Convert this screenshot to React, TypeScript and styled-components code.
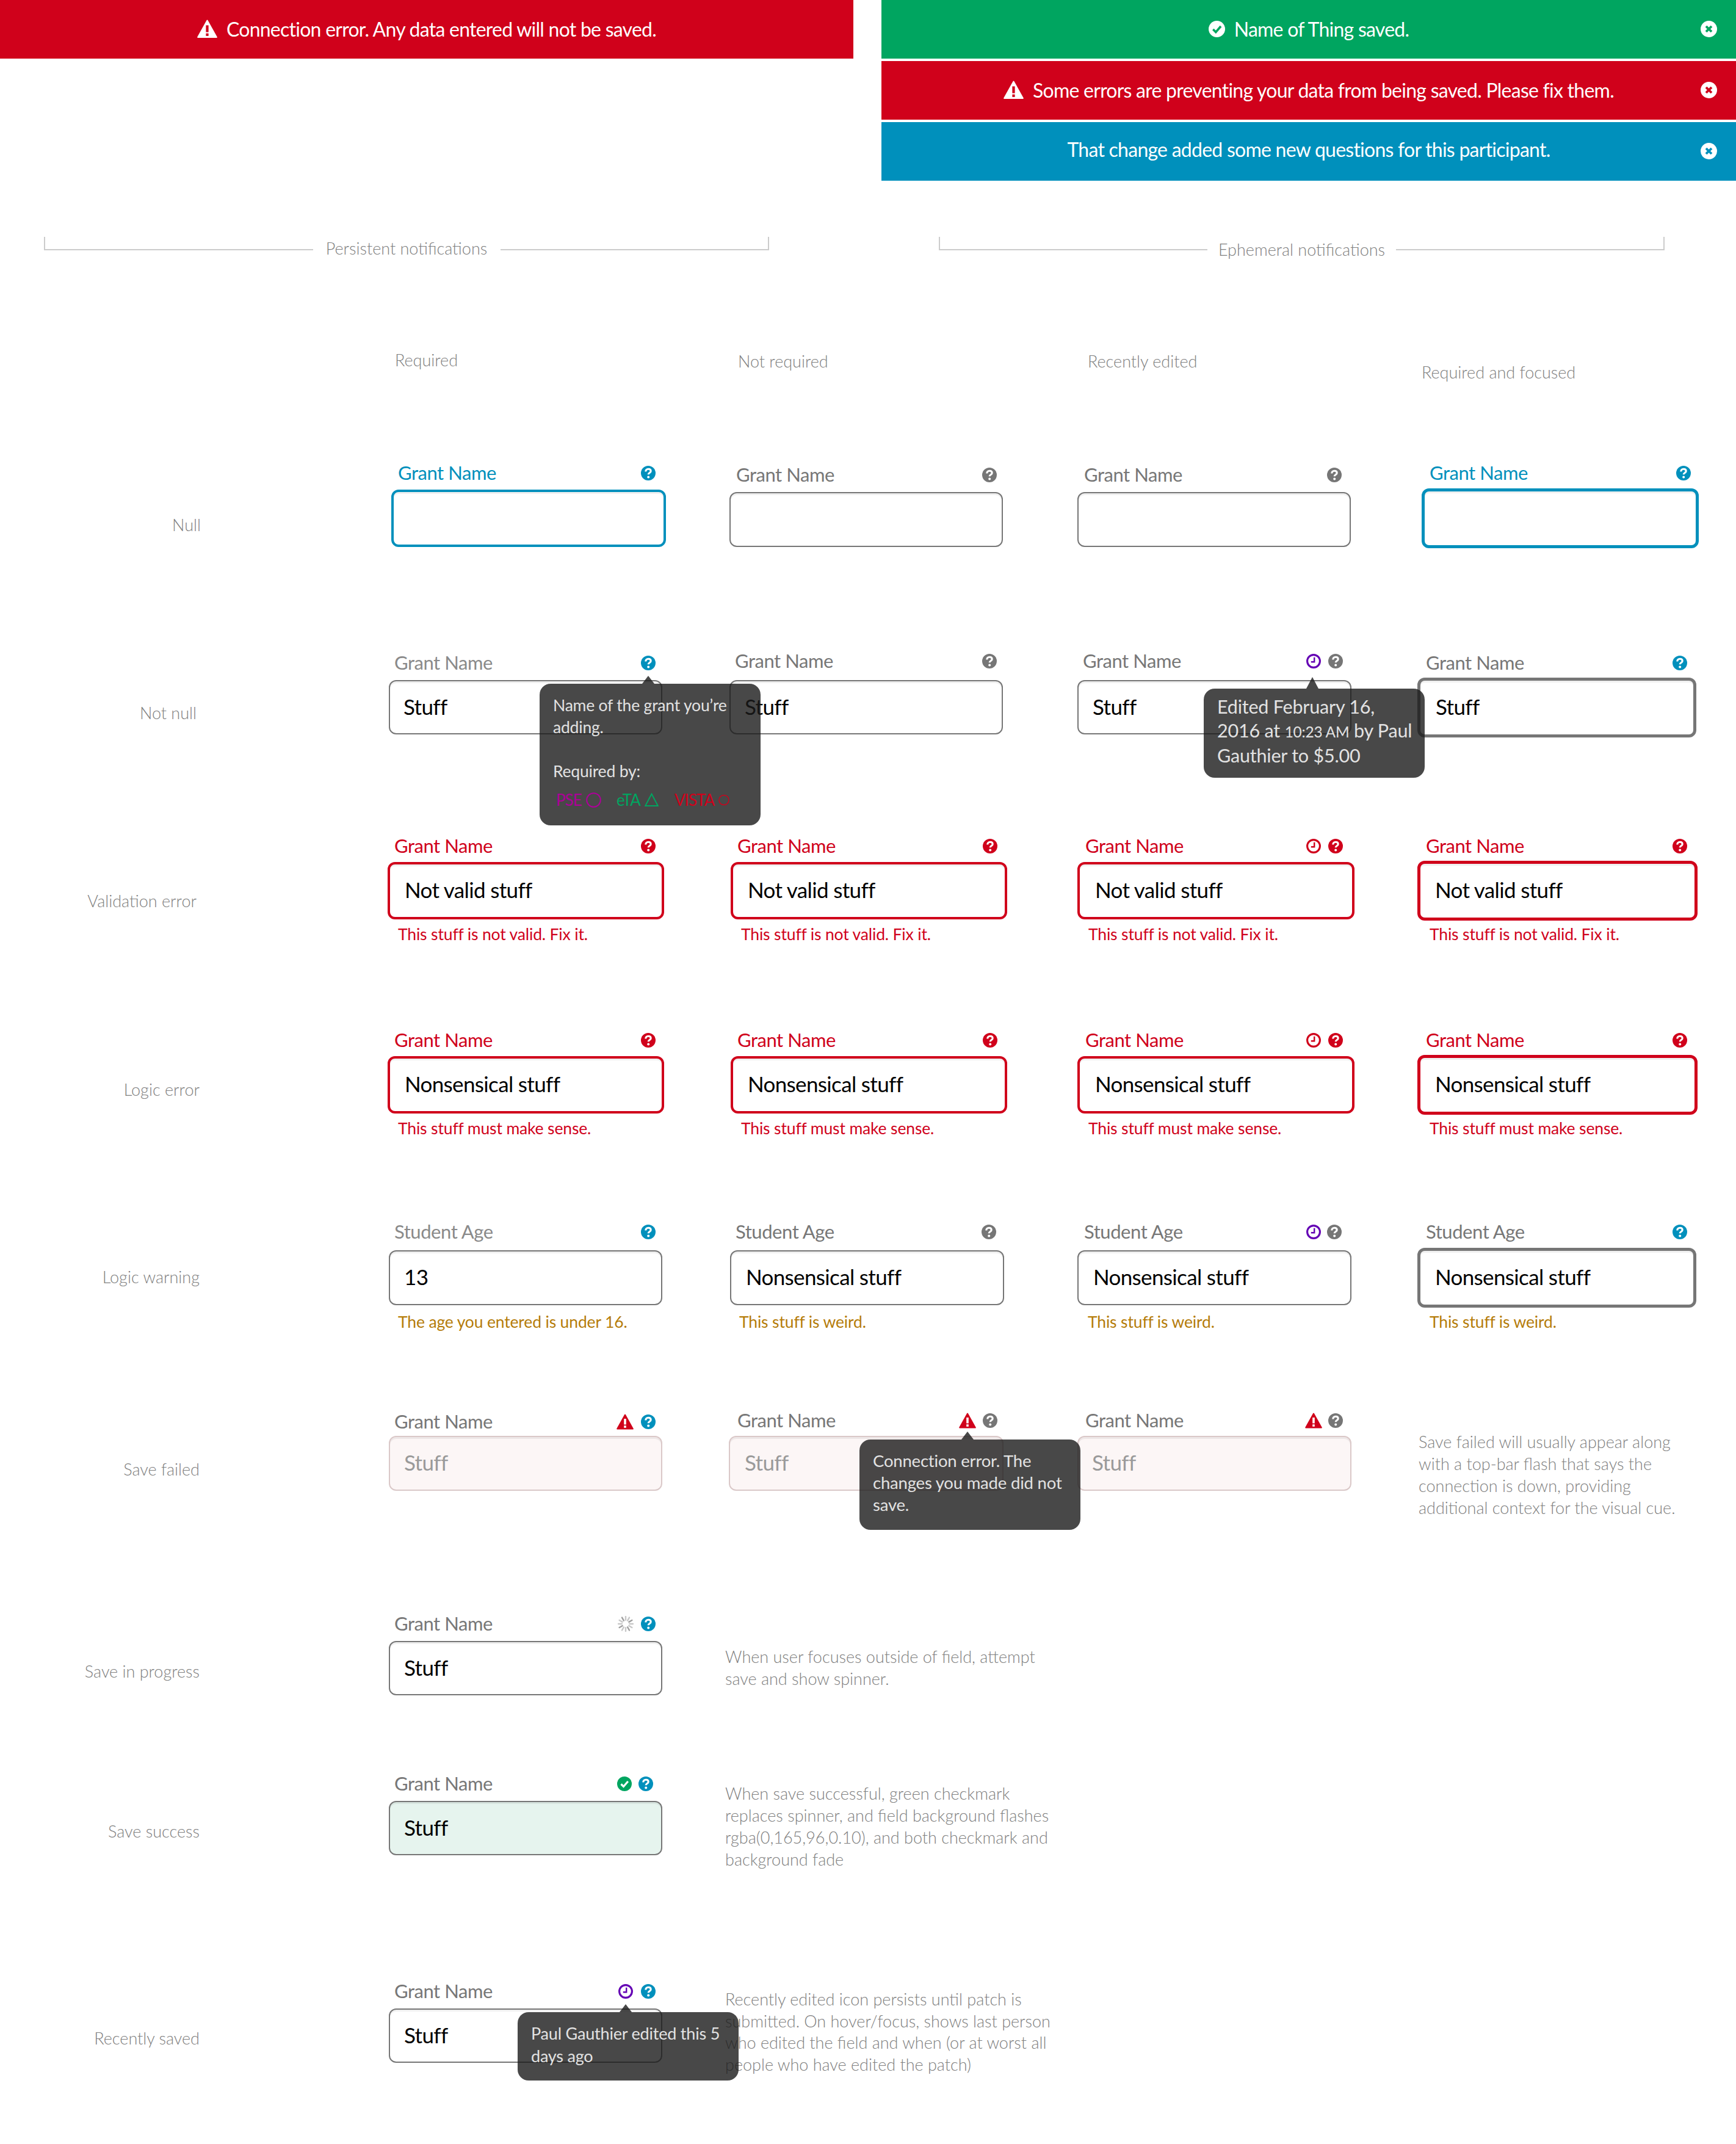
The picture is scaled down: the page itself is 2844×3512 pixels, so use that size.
import React from 'react';
import styled, { createGlobalStyle } from 'styled-components';

const RED = '#d0011b';
const BLUE = '#0090bc';
const GREEN = '#00a560';
const GRAY = '#767676';
const PURPLE = '#6400b4';
const AMBER = '#b57c0a';
const MUTED = '#808080';
const COLS = [0, 635, 1188, 1765, 2322];

const Global = createGlobalStyle`
  html, body { margin: 0; padding: 0; background: #fff; }
  body { font-family: Lato, "Open Sans", "Liberation Sans", sans-serif; }
  * { box-sizing: border-box; }
`;

const Page = styled.div`
  width: 2844px;
  height: 3512px;
  overflow: hidden;
  background: #fff;
`;

/* ---------- banners ---------- */
const BannerArea = styled.div`
  display: flex;
  align-items: flex-start;
  justify-content: space-between;
`;
const BannerStack = styled.div<{ $w: number }>`
  display: flex;
  flex-direction: column;
  gap: 4px;
  width: ${(p) => p.$w}px;
`;
const Banner = styled.div<{ $bg: string; $lift?: number }>`
  position: relative;
  height: 96px;
  display: flex;
  align-items: center;
  justify-content: center;
  gap: 15px;
  padding-bottom: ${(p) => p.$lift ?? 2}px;
  background: ${(p) => p.$bg};
  color: #fff;
  font-size: 32px;
  letter-spacing: -0.75px;
`;
const CloseSlot = styled.span`
  position: absolute;
  right: 31px;
  top: 34px;
  line-height: 0;
`;

/* ---------- brackets ---------- */
const BracketArea = styled.div`
  display: flex;
  margin-top: 92px;
  height: 172px;
`;
const Bracket = styled.div<{ $ml: number; $w: number }>`
  display: flex;
  align-items: flex-start;
  margin-left: ${(p) => p.$ml}px;
  width: ${(p) => p.$w}px;
`;
const BracketArm = styled.div<{ $side: 'left' | 'right' }>`
  flex: 1;
  height: 22px;
  border-bottom: 2px solid #ccc;
  border-${(p) => p.$side}: 2px solid #ccc;
`;
const BracketLabel = styled.div<{ $w: number; $mt: number }>`
  width: ${(p) => p.$w}px;
  margin-top: ${(p) => p.$mt}px;
  text-align: center;
  font-size: 27px;
  font-weight: 300;
  line-height: 36px;
  color: ${MUTED};
`;

/* ---------- matrix ---------- */
const Row = styled.div<{ $h: number }>`
  display: grid;
  grid-template-columns: 635px 553px 577px 557px 522px;
  align-items: start;
  height: ${(p) => p.$h}px;
`;
const ColumnHead = styled.div<{ $ml: number; $mt: number }>`
  margin-left: ${(p) => p.$ml}px;
  margin-top: ${(p) => p.$mt}px;
  font-size: 27px;
  font-weight: 300;
  line-height: 36px;
  color: ${MUTED};
  white-space: nowrap;
`;
const RowTitle = styled.div<{ $pr: number; $mt: number }>`
  padding-right: ${(p) => p.$pr}px;
  margin-top: ${(p) => p.$mt}px;
  text-align: right;
  font-size: 27px;
  font-weight: 300;
  line-height: 36px;
  color: ${MUTED};
  white-space: nowrap;
`;
const Cell = styled.div<{ $ml: number; $mt: number; $w: number }>`
  position: relative;
  margin-left: ${(p) => p.$ml}px;
  margin-top: ${(p) => p.$mt}px;
  width: ${(p) => p.$w}px;
`;
const LabelRow = styled.div<{ $h: number; $pl: number; $pr: number }>`
  display: flex;
  align-items: flex-start;
  justify-content: space-between;
  height: ${(p) => p.$h}px;
  padding-left: ${(p) => p.$pl}px;
  padding-right: ${(p) => p.$pr}px;
`;
const FieldLabel = styled.div<{ $c: string }>`
  font-size: 31px;
  line-height: 38px;
  color: ${(p) => p.$c};
  letter-spacing: -0.45px;
  white-space: nowrap;
`;
const IconGroup = styled.div<{ $gap: number }>`
  display: flex;
  align-items: center;
  height: 40px;
  gap: ${(p) => p.$gap}px;
`;
const Input = styled.div<{ $c: string; $bw: number; $bg: string; $h: number; $pl: number; $text: string }>`
  display: flex;
  align-items: center;
  height: ${(p) => p.$h}px;
  padding-left: ${(p) => p.$pl}px;
  padding-bottom: 4px;
  border: ${(p) => p.$bw}px solid ${(p) => p.$c};
  border-radius: 12px;
  background: ${(p) => p.$bg};
  box-shadow: inset 0 3px 0 rgba(0, 0, 0, 0.06);
  color: ${(p) => p.$text};
  font-size: 35px;
  letter-spacing: -0.65px;
  white-space: nowrap;
`;
const Message = styled.div<{ $c: string; $pl: number; $mt: number }>`
  margin-top: ${(p) => p.$mt}px;
  padding-left: ${(p) => p.$pl}px;
  color: ${(p) => p.$c};
  font-size: 26.5px;
  line-height: 36px;
  letter-spacing: -0.15px;
  white-space: nowrap;
`;
const Note = styled.div<{ $col: number; $ml: number; $mt: number; $lh: number }>`
  grid-column: ${(p) => p.$col};
  margin-left: ${(p) => p.$ml}px;
  margin-top: ${(p) => p.$mt}px;
  color: ${MUTED};
  font-size: 27px;
  font-weight: 300;
  line-height: ${(p) => p.$lh}px;
  white-space: nowrap;
`;

/* ---------- tooltips ---------- */
const TIP_BG = 'rgba(26, 26, 26, 0.8)';
const Tooltip = styled.div<{ $left: number; $top: number; $h: number; $pt: number; $lh: number; $fs: number }>`
  position: absolute;
  z-index: 5;
  left: ${(p) => p.$left}px;
  top: ${(p) => p.$top}px;
  width: 362px;
  height: ${(p) => p.$h}px;
  padding: ${(p) => p.$pt}px 0 0 22px;
  border-radius: 18px;
  background: ${TIP_BG};
  color: #e2e2e2;
  font-size: ${(p) => p.$fs}px;
  line-height: ${(p) => p.$lh}px;
  letter-spacing: -0.2px;
  white-space: nowrap;
`;
const TipArrow = styled.span<{ $left: number; $h: number }>`
  position: absolute;
  left: ${(p) => p.$left - 10}px;
  bottom: 100%;
  width: 0;
  height: 0;
  border-left: 10px solid transparent;
  border-right: 10px solid transparent;
  border-bottom: ${(p) => p.$h}px solid ${TIP_BG};
`;
const TipGap = styled.div`
  height: 36px;
`;
const TagRow = styled.div`
  display: flex;
  align-items: center;
  height: 36px;
  margin-top: 11px;
  margin-left: 5px;
`;
const Tag = styled.span<{ $c: string; $w: number }>`
  display: inline-flex;
  align-items: center;
  gap: 7px;
  width: ${(p) => p.$w}px;
  color: ${(p) => p.$c};
  font-size: 26px;
  letter-spacing: -1px;
`;
const SmallTime = styled.span`
  font-size: 0.8em;
`;

/* ---------- icons ---------- */
const QIcon = ({ c }: { c: string }) => (
  <svg width="24" height="24" viewBox="0 0 24 24">
    <circle cx="12" cy="12" r="12" fill={c} />
    <path d="M7.8 9.4c0-2.6 1.8-4.2 4.3-4.2s4.1 1.4 4.1 3.5c0 3-4 2.7-4 5.6" fill="none" stroke="#fff" strokeWidth="3.1" />
    <circle cx="12.2" cy="18.6" r="2" fill="#fff" />
  </svg>
);
const ClockIcon = ({ c }: { c: string }) => (
  <svg width="24" height="24" viewBox="0 0 24 24">
    <circle cx="12" cy="12" r="10.4" fill="#fff" stroke={c} strokeWidth="3.1" />
    <path d="M13.2 5.8v7.5H7.8" fill="none" stroke={c} strokeWidth="2.4" />
  </svg>
);
const WarnIcon = ({ c, mark, size = 28 }: { c: string; mark: string; size?: number }) => (
  <svg width={size} height={size * 0.93} viewBox="0 0 28 26">
    <path d="M14 1.5 26.8 24.5H1.2Z" fill={c} stroke={c} strokeWidth="2" strokeLinejoin="round" />
    <rect x="12.2" y="8" width="3.6" height="9.5" fill={mark} />
    <rect x="12.2" y="19.2" width="3.6" height="3.6" fill={mark} />
  </svg>
);
const CheckIcon = ({ c, mark, size = 24 }: { c: string; mark: string; size?: number }) => (
  <svg width={size} height={size} viewBox="0 0 24 24">
    <circle cx="12" cy="12" r="12" fill={c} />
    <path d="M6.5 12.5 10.5 16.5 17.8 8" fill="none" stroke={mark} strokeWidth="3.2" />
  </svg>
);
const CloseIcon = ({ mark }: { mark: string }) => (
  <svg width="27" height="27" viewBox="0 0 24 24">
    <circle cx="12" cy="12" r="12" fill="#fff" />
    <path d="M8 8l8 8M16 8l-8 8" fill="none" stroke={mark} strokeWidth="3.4" />
  </svg>
);
const SpinnerIcon = () => (
  <svg width="26" height="26" viewBox="0 0 26 26">
    {Array.from({ length: 12 }, (_, i) => (
      <line
        key={i}
        x1="13"
        y1="1"
        x2="13"
        y2="6.8"
        stroke={i % 3 === 2 ? '#a0a0a0' : '#c8c8c8'}
        strokeWidth="2.4"
        strokeLinecap="round"
        transform={`rotate(${i * 30} 13 13)`}
      />
    ))}
  </svg>
);
const TagCircle = ({ c }: { c: string }) => (
  <svg width="25" height="25" viewBox="0 0 25 25">
    <circle cx="12.5" cy="12.5" r="11.3" fill="none" stroke={c} strokeWidth="2" />
  </svg>
);
const TagTriangle = ({ c }: { c: string }) => (
  <svg width="23" height="22" viewBox="0 0 23 22">
    <path d="M11.5 1.5 21.8 21H1.2Z" fill="none" stroke={c} strokeWidth="2" />
  </svg>
);

/* ---------- data ---------- */
type IconSpec = { kind: 'q' | 'clock' | 'warn' | 'check' | 'spin'; c: string; x: number };
type CellSpec = {
  x: number; w: number; top: number; h: number; lx: number; ly: number; lc: string;
  label: string; value?: string; vx?: number; bc: string; bw: number;
  bg?: string; text?: string; icons: IconSpec[];
  msg?: string; msgX?: number; msgY?: number; msgC?: string;
  tip?: React.ReactNode;
};
type NoteSpec = { col: number; x: number; y: number; lh: number; lines: string[] };
type RowSpec = { top: number; h: number; title: string; right: number; ty: number; cells: CellSpec[]; note?: NoteSpec };

const q = (c: string, x: number): IconSpec => ({ kind: 'q', c, x });
const clock = (c: string, x: number): IconSpec => ({ kind: 'clock', c, x });
const warn = (x: number): IconSpec => ({ kind: 'warn', c: RED, x });

const LG = '#8a8a8a';
const LD = '#777777';
const BASE = { label: 'Grant Name', bc: GRAY, bw: 2 };
const PALE = { bc: '#dac8c8', bg: '#fcf6f6', text: '#9a9a9a', value: 'Stuff' };

const tip1 = (
  <Tooltip $left={247} $top={54} $h={232} $pt={17} $lh={36} $fs={26.5}>
    <TipArrow $left={178} $h={13} />
    Name of the grant you’re
    <br />
    adding.
    <TipGap />
    Required by:
    <TagRow>
      <Tag $c="#ad0098" $w={99}>PSE <TagCircle c="#ad0098" /></Tag>
      <Tag $c={GREEN} $w={95}>eTA <TagTriangle c={GREEN} /></Tag>
      <Tag $c={RED} $w={90}>VISTA <TagCircle c={RED} /></Tag>
    </TagRow>
  </Tooltip>
);
const tip2 = (
  <Tooltip $left={207} $top={65} $h={146} $pt={10} $lh={38.5} $fs={30.5}>
    <TipArrow $left={178} $h={19} />
    Edited February 16,
    <br />
    2016 at <SmallTime>10:23 AM</SmallTime> by Paul
    <br />
    Gauthier to $5.00
  </Tooltip>
);
const tip3 = (
  <Tooltip $left={214} $top={51} $h={148} $pt={17} $lh={36} $fs={27.5}>
    <TipArrow $left={177} $h={13} />
    Connection error. The
    <br />
    changes you made did not
    <br />
    save.
  </Tooltip>
);
const tip4 = (
  <Tooltip $left={211} $top={54} $h={112} $pt={16} $lh={37} $fs={27}>
    <TipArrow $left={177} $h={13} />
    Paul Gauthier edited this 5
    <br />
    days ago
  </Tooltip>
);

const errorRow = (
  d: number, value: string, msg: string, title: string, top: number, h: number, right: number, ty: number,
): RowSpec => {
  const shared = { ...BASE, lc: RED, bc: RED, value, msg, msgC: RED, msgY: 1530 + d };
  return {
    top, h, title, right, ty,
    cells: [
      { ...shared, x: 635, w: 453, top: 1412 + d, h: 94, lx: 646, ly: 1386 + d, vx: 663, bw: 4, icons: [q(RED, 1062)], msgX: 652 },
      { ...shared, x: 1197, w: 453, top: 1412 + d, h: 94, lx: 1208, ly: 1386 + d, vx: 1225, bw: 4, icons: [q(RED, 1622)], msgX: 1214 },
      { ...shared, x: 1765, w: 454, top: 1412 + d, h: 94, lx: 1778, ly: 1386 + d, vx: 1794, bw: 4, icons: [clock(RED, 2152), q(RED, 2188)], msgX: 1783 },
      { ...shared, x: 2322, w: 459, top: 1410 + d, h: 98, lx: 2336, ly: 1386 + d, vx: 2351, bw: 5, icons: [q(RED, 2752)], msgX: 2342 },
    ],
  };
};

const warnShared = { ...BASE, label: 'Student Age', ly: 2018, msgY: 2165, msgC: AMBER, value: 'Nonsensical stuff' };

const ROWS: RowSpec[] = [
  {
    top: 740, h: 320, title: 'Null', right: 329, ty: 860,
    cells: [
      { ...BASE, x: 641, w: 450, top: 802, h: 94, lx: 652, ly: 775, lc: BLUE, bc: BLUE, bw: 4, icons: [q(BLUE, 1062)] },
      { ...BASE, x: 1195, w: 448, top: 806, h: 90, lx: 1206, ly: 778, lc: LD, icons: [q(GRAY, 1621)] },
      { ...BASE, x: 1765, w: 448, top: 806, h: 90, lx: 1776, ly: 778, lc: LD, icons: [q(GRAY, 2186)] },
      { ...BASE, x: 2329, w: 454, top: 800, h: 98, lx: 2342, ly: 775, lc: BLUE, bc: BLUE, bw: 5, icons: [q(BLUE, 2758)] },
    ],
  },
  {
    top: 1060, h: 300, title: 'Not null', right: 322, ty: 1168,
    cells: [
      { ...BASE, x: 637, w: 448, top: 1114, h: 89, lx: 646, ly: 1086, lc: LG, value: 'Stuff', vx: 661, icons: [q(BLUE, 1062)], tip: tip1 },
      { ...BASE, x: 1195, w: 448, top: 1114, h: 89, lx: 1204, ly: 1083, lc: LD, value: 'Stuff', vx: 1220, icons: [q(GRAY, 1621)] },
      { ...BASE, x: 1765, w: 449, top: 1114, h: 89, lx: 1774, ly: 1083, lc: LD, value: 'Stuff', vx: 1790, icons: [clock(PURPLE, 2152), q(GRAY, 2188)], tip: tip2 },
      { ...BASE, x: 2322, w: 457, top: 1110, h: 98, lx: 2336, ly: 1086, lc: LD, bw: 5, value: 'Stuff', vx: 2352, icons: [q(BLUE, 2752)] },
    ],
  },
  errorRow(0, 'Not valid stuff', 'This stuff is not valid. Fix it.', 'Validation error', 1360, 320, 322, 1476),
  errorRow(318, 'Nonsensical stuff', 'This stuff must make sense.', 'Logic error', 1680, 310, 327, 1785),
  {
    top: 1990, h: 300, title: 'Logic warning', right: 327, ty: 2092,
    cells: [
      { ...warnShared, x: 637, w: 448, top: 2048, h: 90, lx: 646, lc: LG, value: '13', vx: 662, icons: [q(BLUE, 1062)], msg: 'The age you entered is under 16.', msgX: 652 },
      { ...warnShared, x: 1196, w: 449, top: 2048, h: 90, lx: 1205, lc: LD, vx: 1222, icons: [q(GRAY, 1620)], msg: 'This stuff is weird.', msgX: 1211 },
      { ...warnShared, x: 1765, w: 449, top: 2048, h: 90, lx: 1776, lc: LD, vx: 1791, icons: [clock(PURPLE, 2152), q(GRAY, 2186)], msg: 'This stuff is weird.', msgX: 1782 },
      { ...warnShared, x: 2322, w: 457, top: 2044, h: 98, lx: 2336, lc: LD, bw: 5, vx: 2351, icons: [q(BLUE, 2752)], msg: 'This stuff is weird.', msgX: 2342 },
    ],
  },
  {
    top: 2290, h: 340, title: 'Save failed', right: 327, ty: 2407,
    cells: [
      { ...BASE, ...PALE, x: 637, w: 448, top: 2352, h: 90, lx: 646, ly: 2329, lc: LD, vx: 662, icons: [warn(1024), q(BLUE, 1062)] },
      { ...BASE, ...PALE, x: 1194, w: 450, top: 2352, h: 90, lx: 1208, ly: 2327, lc: LD, vx: 1220, icons: [warn(1585), q(GRAY, 1622)], tip: tip3 },
      { ...BASE, ...PALE, x: 1765, w: 449, top: 2352, h: 90, lx: 1778, ly: 2327, lc: LD, vx: 1789, icons: [warn(2152), q(GRAY, 2188)] },
    ],
    note: {
      col: 5, x: 2324, y: 2362, lh: 36,
      lines: ['Save failed will usually appear along', 'with a top-bar flash that says the', 'connection is down, providing', 'additional context for the visual cue.'],
    },
  },
  {
    top: 2630, h: 260, title: 'Save in progress', right: 327, ty: 2738,
    cells: [
      { ...BASE, x: 637, w: 448, top: 2688, h: 89, lx: 646, ly: 2660, lc: LD, value: 'Stuff', vx: 662, icons: [{ kind: 'spin', c: '', x: 1025 }, q(BLUE, 1062)] },
    ],
    note: { col: 3, x: 1188, y: 2714, lh: 36, lines: ['When user focuses outside of field, attempt', 'save and show spinner.'] },
  },
  {
    top: 2890, h: 330, title: 'Save success', right: 327, ty: 3000,
    cells: [
      { ...BASE, x: 637, w: 448, top: 2950, h: 89, lx: 646, ly: 2922, lc: LD, value: 'Stuff', vx: 662, bg: '#e6f4ee', icons: [{ kind: 'check', c: GREEN, x: 1023 }, q(BLUE, 1058)] },
    ],
    note: {
      col: 3, x: 1188, y: 2938, lh: 36,
      lines: ['When save successful, green checkmark', 'replaces spinner, and field background flashes', 'rgba(0,165,96,0.10), and both checkmark and', 'background fade'],
    },
  },
  {
    top: 3220, h: 292, title: 'Recently saved', right: 327, ty: 3339,
    cells: [
      { ...BASE, x: 637, w: 448, top: 3290, h: 89, lx: 646, ly: 3262, lc: LD, value: 'Stuff', vx: 662, icons: [clock(PURPLE, 1025), q(BLUE, 1062)], tip: tip4 },
    ],
    note: {
      col: 3, x: 1188, y: 3275, lh: 35.5,
      lines: ['Recently edited icon persists until patch is', 'submitted. On hover/focus, shows last person', 'who edited the field and when (or at worst all', 'people who have edited the patch)'],
    },
  },
];

const HEADS = [
  { text: 'Required', x: 647, y: 590 },
  { text: 'Not required', x: 1209, y: 592 },
  { text: 'Recently edited', x: 1782, y: 592 },
  { text: 'Required and focused', x: 2329, y: 610 },
];

const widthOf = (i: IconSpec) => (i.kind === 'warn' ? 28 : i.kind === 'spin' ? 26 : 24);

const FieldIcon = ({ icon }: { icon: IconSpec }) => {
  switch (icon.kind) {
    case 'q': return <QIcon c={icon.c} />;
    case 'clock': return <ClockIcon c={icon.c} />;
    case 'warn': return <WarnIcon c={icon.c} mark="#fff" />;
    case 'check': return <CheckIcon c={icon.c} mark="#fff" />;
    default: return <SpinnerIcon />;
  }
};

const Field = ({ spec, col, rowTop }: { spec: CellSpec; col: number; rowTop: number }) => {
  const labelTop = spec.ly - 20;
  const last = spec.icons[spec.icons.length - 1];
  const first = spec.icons[0];
  const gap = spec.icons.length > 1 ? last.x - first.x - (widthOf(first) + widthOf(last)) / 2 : 0;
  const pr = spec.x + spec.w - (last.x + widthOf(last) / 2);
  return (
    <Cell $ml={spec.x - COLS[col]} $mt={labelTop - rowTop} $w={spec.w}>
      <LabelRow $h={spec.top - labelTop} $pl={spec.lx - spec.x} $pr={pr}>
        <FieldLabel $c={spec.lc}>{spec.label}</FieldLabel>
        <IconGroup $gap={gap}>
          {spec.icons.map((ic, i) => <FieldIcon key={i} icon={ic} />)}
        </IconGroup>
      </LabelRow>
      <Input
        $c={spec.bc}
        $bw={spec.bw}
        $bg={spec.bg ?? '#fff'}
        $h={spec.h}
        $pl={(spec.vx ?? spec.x) - spec.x - spec.bw}
        $text={spec.text ?? '#000'}
      >
        {spec.value}
      </Input>
      {spec.msg && (
        <Message $c={spec.msgC ?? RED} $pl={(spec.msgX ?? spec.x) - spec.x} $mt={(spec.msgY ?? 0) - 18 - spec.top - spec.h}>
          {spec.msg}
        </Message>
      )}
      {spec.tip}
    </Cell>
  );
};

export default function App() {
  return (
    <Page>
      <Global />
      <BannerArea>
        <BannerStack $w={1398}>
          <Banner $bg={RED}>
            <WarnIcon c="#fff" mark={RED} size={33} />
            Connection error. Any data entered will not be saved.
          </Banner>
        </BannerStack>
        <BannerStack $w={1400}>
          <Banner $bg={GREEN}>
            <CheckIcon c="#fff" mark={GREEN} size={27} />
            Name of Thing saved.
            <CloseSlot><CloseIcon mark={GREEN} /></CloseSlot>
          </Banner>
          <Banner $bg={RED}>
            <WarnIcon c="#fff" mark={RED} size={33} />
            Some errors are preventing your data from being saved. Please fix them.
            <CloseSlot><CloseIcon mark={RED} /></CloseSlot>
          </Banner>
          <Banner $bg={BLUE} $lift={8}>
            That change added some new questions for this participant.
            <CloseSlot><CloseIcon mark={BLUE} /></CloseSlot>
          </Banner>
        </BannerStack>
      </BannerArea>

      <BracketArea>
        <Bracket $ml={72} $w={1188}>
          <BracketArm $side="left" />
          <BracketLabel $w={307} $mt={1}>Persistent notifications</BracketLabel>
          <BracketArm $side="right" />
        </Bracket>
        <Bracket $ml={278} $w={1189}>
          <BracketArm $side="left" />
          <BracketLabel $w={309} $mt={3}>Ephemeral notifications</BracketLabel>
          <BracketArm $side="right" />
        </Bracket>
      </BracketArea>

      <Row $h={180}>
        <div />
        {HEADS.map((h, i) => (
          <ColumnHead key={h.text} $ml={h.x - COLS[i + 1]} $mt={h.y - 18 - 560}>{h.text}</ColumnHead>
        ))}
      </Row>

      {ROWS.map((row) => (
        <Row key={row.title} $h={row.h}>
          <RowTitle $pr={635 - row.right} $mt={row.ty - 18 - row.top}>{row.title}</RowTitle>
          {row.cells.map((c, i) => {
            const col = c.x >= COLS[4] ? 4 : c.x >= COLS[3] ? 3 : c.x >= COLS[2] ? 2 : 1;
            return <Field key={i} spec={c} col={col} rowTop={row.top} />;
          })}
          {row.note && (
            <Note $col={row.note.col} $ml={row.note.x - COLS[row.note.col - 1]} $mt={row.note.y - 18 - row.top} $lh={row.note.lh}>
              {row.note.lines.map((l) => <div key={l}>{l}</div>)}
            </Note>
          )}
        </Row>
      ))}
    </Page>
  );
}
